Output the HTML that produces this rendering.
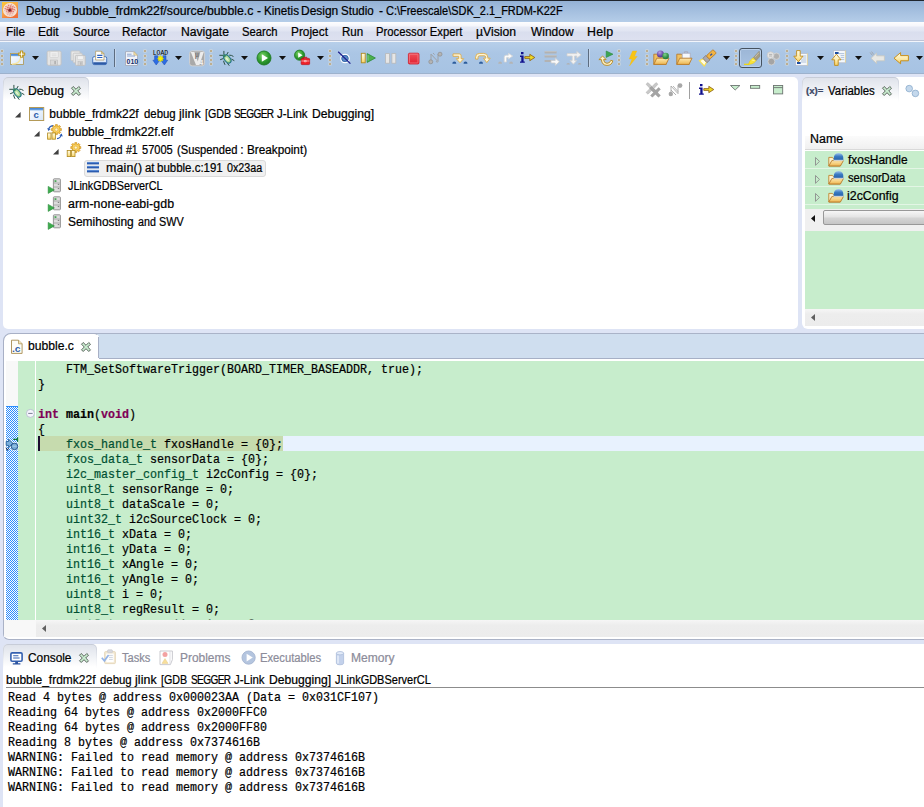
<!DOCTYPE html>
<html><head><meta charset="utf-8"><title>Debug - bubble_frdmk22f/source/bubble.c - Kinetis Design Studio</title>
<style>

html,body{margin:0;padding:0}
body{width:924px;height:807px;overflow:hidden;position:relative;background:#dee4f5;font-family:'Liberation Sans',sans-serif;font-size:12px}
div,span,svg{position:absolute}
.t{white-space:pre;line-height:1;transform-origin:0 0;-webkit-text-stroke:0.22px currentColor}
.ic{width:16px;height:16px;overflow:visible}

</style></head>
<body>
<div style="left:0px;top:0px;width:924px;height:22px;background:linear-gradient(#92b0d4,#9cb8da 25%,#a8c2e1 60%,#b5cde8)"></div>
<div style="left:0px;top:0px;width:924px;height:1px;background:#20262e"></div>
<div style="left:0px;top:22px;width:924px;height:18px;background:linear-gradient(#fdfdfe 0,#f5f6fb 4px,#e7eaf5 5px,#e1e5f2 9px,#d9deee 10px,#dde1f0 18px)"></div>
<div style="left:0px;top:40px;width:924px;height:1px;background:#bcc3d6"></div>
<div style="left:0px;top:41px;width:924px;height:1px;background:#f2f5fb"></div>
<div style="left:0px;top:42px;width:924px;height:31px;background:linear-gradient(#b7cfea,#abc6e5 35%,#a7c3e3)"></div>
<div style="left:0px;top:73px;width:924px;height:1px;background:#9db2cd"></div>
<div style="left:3px;top:77px;width:795px;height:252px;background:#fff;border-radius:5px 5px 5px 5px"></div>
<div style="left:3px;top:77px;width:86px;height:26px;box-sizing:border-box;background:linear-gradient(#dfe3eb,#fff 88%) padding-box,linear-gradient(#c6cbd7,#eef0f4 60%,#fff 95%) border-box;border-radius:5px 5px 0 0;border:1px solid transparent;border-bottom:0"></div>
<div style="left:802px;top:77px;width:130px;height:252px;background:#fff;border-radius:5px 0 0 6px"></div>
<div style="left:802px;top:77px;width:97px;height:26px;box-sizing:border-box;background:linear-gradient(#dfe3eb,#fff 88%) padding-box,linear-gradient(#c6cbd7,#eef0f4 60%,#fff 95%) border-box;border-radius:5px 5px 0 0;border:1px solid transparent;border-bottom:0"></div>
<div style="left:805px;top:136px;width:119px;height:13px;background:linear-gradient(#fbfbfb,#f0f0f0)"></div>
<div style="left:805px;top:148.5px;width:119px;height:1px;background:#d9d9d9"></div>
<div style="left:805px;top:151px;width:119px;height:58px;background:#c7edcc"></div>
<div style="left:805px;top:168px;width:119px;height:1px;background:#e3f6e5"></div>
<div style="left:805px;top:186px;width:119px;height:1px;background:#e3f6e5"></div>
<div style="left:805px;top:204px;width:119px;height:1px;background:#e3f6e5"></div>
<div style="left:805px;top:209px;width:119px;height:22px;background:#f0f0f0"></div>
<div style="left:823px;top:210px;width:110px;height:14.5px;box-sizing:border-box;border:1px solid #989898;border-radius:2px;background:linear-gradient(#f6f6f6,#e4e4e4 45%,#d4d4d4 55%,#c6c6c6)"></div>
<svg style="left:811px;top:214.5px;width:4px;height:7px" viewBox="0 0 4 7"><path d="M4 0v7L0 3.5z" fill="#111"/></svg>
<div style="left:805px;top:231px;width:119px;height:78px;background:#c7edcc"></div>
<div style="left:805px;top:309px;width:119px;height:17px;background:linear-gradient(#f6f6f6,#ededed 30%,#ececec)"></div>
<svg style="left:811px;top:314px;width:4px;height:7px" viewBox="0 0 4 7"><path d="M4 0v7L0 3.5z" fill="#606060"/></svg>
<div style="left:3px;top:333px;width:921px;height:26px;background:#cfdeef;border-radius:8px 0 0 0"></div>
<div style="left:10px;top:333px;width:914px;height:1px;background:#aab3c8"></div>
<div style="left:3px;top:358px;width:921px;height:1px;background:#a6b0c6"></div>
<div style="left:3px;top:359px;width:930px;height:281px;box-sizing:border-box;background:#fff;border:1px solid #aab2c6;border-top:0;border-radius:0 0 0 6px"></div>
<div style="left:3px;top:333px;width:96px;height:27px;box-sizing:border-box;background:#fff;border-radius:8px 5px 0 0;border:1px solid #a8b0c6;border-bottom:0;border-right-color:transparent"></div>
<div style="left:98px;top:337px;width:1px;height:21px;background:#a8b0c6"></div>
<div style="left:6px;top:361px;width:12px;height:259px;background:#f8f8f8"></div>
<div style="left:18px;top:361px;width:17px;height:259px;background:#c7edcc"></div>
<div style="left:36px;top:361px;width:888px;height:259px;background:#c7edcc"></div>
<div style="left:6px;top:406px;width:12px;height:214px;background:conic-gradient(#2a8cff 25%,#fdfdfd 0 50%,#2a8cff 0 75%,#fdfdfd 0) 0 1px/2px 2px"></div>
<div style="left:6px;top:406px;width:12px;height:1px;background:#2a8cff"></div>
<div style="left:38px;top:436px;width:886px;height:15px;background:#e8f2fe"></div>
<div style="left:40px;top:436px;width:243px;height:15px;background:#c6dbae"></div>
<div style="left:38px;top:436px;width:2px;height:15px;background:#1c0c30"></div>
<div style="left:4px;top:620px;width:32px;height:17px;background:#f8f8f8"></div>
<div style="left:36px;top:620px;width:888px;height:17px;background:linear-gradient(#f6f6f6,#ededed 30%,#ececec)"></div>
<svg style="left:42px;top:625px;width:4px;height:7px" viewBox="0 0 4 7"><path d="M4 0v7L0 3.5z" fill="#606060"/></svg>
<div style="left:0px;top:640px;width:924px;height:4px;background:#dee4f5"></div>
<div style="left:3px;top:644px;width:930px;height:170px;background:#fff;border-radius:5px 0 0 0"></div>
<div style="left:3px;top:644px;width:94px;height:26px;box-sizing:border-box;background:linear-gradient(#dfe3eb,#fff 88%) padding-box,linear-gradient(#c6cbd7,#eef0f4 60%,#fff 95%) border-box;border-radius:5px 5px 0 0;border:1px solid transparent;border-bottom:0"></div>
<div style="left:6px;top:687px;width:918px;height:1px;background:#8c8c8c"></div>
<svg width="0" height="0" style="left:0;top:0"><defs>
<linearGradient id="gWin" x1="0" y1="0" x2="1" y2="1"><stop offset="0" stop-color="#fff"/><stop offset="1" stop-color="#d6e6fa"/></linearGradient>
<linearGradient id="gBar" x1="0" y1="0" x2="0" y2="1"><stop offset="0" stop-color="#3f7fd0"/><stop offset="1" stop-color="#78aee8"/></linearGradient>
<radialGradient id="gGreen" cx="0.4" cy="0.35" r="0.7"><stop offset="0" stop-color="#7fd46a"/><stop offset="0.6" stop-color="#2e9a2e"/><stop offset="1" stop-color="#1d7a22"/></radialGradient>
<linearGradient id="gYel" x1="0" y1="0" x2="0" y2="1"><stop offset="0" stop-color="#fffce8"/><stop offset="0.55" stop-color="#fdeaa8"/><stop offset="1" stop-color="#f7cf62"/></linearGradient>
<radialGradient id="gApp" cx="0.5" cy="0.5" r="0.5"><stop offset="0" stop-color="#7c2c2c"/><stop offset="0.14" stop-color="#b85050"/><stop offset="0.3" stop-color="#e8b0a0"/><stop offset="0.7" stop-color="#f4d8cc"/><stop offset="1" stop-color="#f8ead8"/></radialGradient>
<linearGradient id="gAppBg" x1="0" y1="0" x2="0.6" y2="1"><stop offset="0" stop-color="#fcc838"/><stop offset="0.5" stop-color="#f8a848"/><stop offset="1" stop-color="#f07038"/></linearGradient>
<pattern id="dots" width="2.2" height="2.2" patternUnits="userSpaceOnUse" patternTransform="rotate(20)"><circle cx="0.8" cy="0.8" r="0.62" fill="#d02828"/></pattern>
<linearGradient id="gFold" x1="0" y1="0" x2="0" y2="1"><stop offset="0" stop-color="#fde9b0"/><stop offset="1" stop-color="#eeb650"/></linearGradient>
<linearGradient id="gGray" x1="0" y1="0" x2="0" y2="1"><stop offset="0" stop-color="#ececec"/><stop offset="1" stop-color="#c4c4c4"/></linearGradient>
<radialGradient id="gBlueBall" cx="0.4" cy="0.3" r="0.8"><stop offset="0" stop-color="#9cc4f4"/><stop offset="0.5" stop-color="#3a78c8"/><stop offset="1" stop-color="#1c4c98"/></radialGradient>
<radialGradient id="gPurp" cx="0.4" cy="0.3" r="0.8"><stop offset="0" stop-color="#b8a0e0"/><stop offset="0.6" stop-color="#6a4aa8"/><stop offset="1" stop-color="#4a2f88"/></radialGradient>
<radialGradient id="gGrBall" cx="0.4" cy="0.3" r="0.8"><stop offset="0" stop-color="#7fcf8a"/><stop offset="0.6" stop-color="#2f8f45"/><stop offset="1" stop-color="#1f6f35"/></radialGradient>
<linearGradient id="gRed" x1="0" y1="0" x2="0" y2="1"><stop offset="0" stop-color="#f0505a"/><stop offset="1" stop-color="#e02030"/></linearGradient>
<radialGradient id="gBug" cx="0.45" cy="0.45" r="0.6"><stop offset="0" stop-color="#e4f6d4"/><stop offset="0.6" stop-color="#a4d490"/><stop offset="1" stop-color="#6cb068"/></radialGradient>
<linearGradient id="gDome" x1="0" y1="0" x2="0" y2="1"><stop offset="0" stop-color="#a4c8ee"/><stop offset="0.45" stop-color="#3c7cc4"/><stop offset="1" stop-color="#2460a8"/></linearGradient>
<linearGradient id="gThumb" x1="0" y1="0" x2="0" y2="1"><stop offset="0" stop-color="#f6f6f6"/><stop offset="0.5" stop-color="#e6e6e6"/><stop offset="1" stop-color="#d2d2d2"/></linearGradient>
<pattern id="hatch" width="2" height="2" patternUnits="userSpaceOnUse"><rect width="2" height="2" fill="#b9d8fb"/><rect width="1" height="1" fill="#2f86ee"/><rect x="1" y="1" width="1" height="1" fill="#2f86ee"/></pattern>
</defs></svg>
<div style="left:1px;top:50px;width:2px;height:2px;background:#bdae90;box-shadow:0 0 0 .5px rgba(235,230,215,.7)"></div>
<div style="left:1px;top:55px;width:2px;height:2px;background:#bdae90;box-shadow:0 0 0 .5px rgba(235,230,215,.7)"></div>
<div style="left:1px;top:59px;width:2px;height:2px;background:#bdae90;box-shadow:0 0 0 .5px rgba(235,230,215,.7)"></div>
<div style="left:1px;top:63px;width:2px;height:2px;background:#bdae90;box-shadow:0 0 0 .5px rgba(235,230,215,.7)"></div>
<div style="left:144px;top:50px;width:2px;height:2px;background:#bdae90;box-shadow:0 0 0 .5px rgba(235,230,215,.7)"></div>
<div style="left:144px;top:55px;width:2px;height:2px;background:#bdae90;box-shadow:0 0 0 .5px rgba(235,230,215,.7)"></div>
<div style="left:144px;top:59px;width:2px;height:2px;background:#bdae90;box-shadow:0 0 0 .5px rgba(235,230,215,.7)"></div>
<div style="left:144px;top:63px;width:2px;height:2px;background:#bdae90;box-shadow:0 0 0 .5px rgba(235,230,215,.7)"></div>
<div style="left:210px;top:50px;width:2px;height:2px;background:#bdae90;box-shadow:0 0 0 .5px rgba(235,230,215,.7)"></div>
<div style="left:210px;top:55px;width:2px;height:2px;background:#bdae90;box-shadow:0 0 0 .5px rgba(235,230,215,.7)"></div>
<div style="left:210px;top:59px;width:2px;height:2px;background:#bdae90;box-shadow:0 0 0 .5px rgba(235,230,215,.7)"></div>
<div style="left:210px;top:63px;width:2px;height:2px;background:#bdae90;box-shadow:0 0 0 .5px rgba(235,230,215,.7)"></div>
<div style="left:329px;top:50px;width:2px;height:2px;background:#bdae90;box-shadow:0 0 0 .5px rgba(235,230,215,.7)"></div>
<div style="left:329px;top:55px;width:2px;height:2px;background:#bdae90;box-shadow:0 0 0 .5px rgba(235,230,215,.7)"></div>
<div style="left:329px;top:59px;width:2px;height:2px;background:#bdae90;box-shadow:0 0 0 .5px rgba(235,230,215,.7)"></div>
<div style="left:329px;top:63px;width:2px;height:2px;background:#bdae90;box-shadow:0 0 0 .5px rgba(235,230,215,.7)"></div>
<div style="left:618px;top:50px;width:2px;height:2px;background:#bdae90;box-shadow:0 0 0 .5px rgba(235,230,215,.7)"></div>
<div style="left:618px;top:55px;width:2px;height:2px;background:#bdae90;box-shadow:0 0 0 .5px rgba(235,230,215,.7)"></div>
<div style="left:618px;top:59px;width:2px;height:2px;background:#bdae90;box-shadow:0 0 0 .5px rgba(235,230,215,.7)"></div>
<div style="left:618px;top:63px;width:2px;height:2px;background:#bdae90;box-shadow:0 0 0 .5px rgba(235,230,215,.7)"></div>
<div style="left:646px;top:50px;width:2px;height:2px;background:#bdae90;box-shadow:0 0 0 .5px rgba(235,230,215,.7)"></div>
<div style="left:646px;top:55px;width:2px;height:2px;background:#bdae90;box-shadow:0 0 0 .5px rgba(235,230,215,.7)"></div>
<div style="left:646px;top:59px;width:2px;height:2px;background:#bdae90;box-shadow:0 0 0 .5px rgba(235,230,215,.7)"></div>
<div style="left:646px;top:63px;width:2px;height:2px;background:#bdae90;box-shadow:0 0 0 .5px rgba(235,230,215,.7)"></div>
<div style="left:735px;top:50px;width:2px;height:2px;background:#bdae90;box-shadow:0 0 0 .5px rgba(235,230,215,.7)"></div>
<div style="left:735px;top:55px;width:2px;height:2px;background:#bdae90;box-shadow:0 0 0 .5px rgba(235,230,215,.7)"></div>
<div style="left:735px;top:59px;width:2px;height:2px;background:#bdae90;box-shadow:0 0 0 .5px rgba(235,230,215,.7)"></div>
<div style="left:735px;top:63px;width:2px;height:2px;background:#bdae90;box-shadow:0 0 0 .5px rgba(235,230,215,.7)"></div>
<div style="left:786px;top:50px;width:2px;height:2px;background:#bdae90;box-shadow:0 0 0 .5px rgba(235,230,215,.7)"></div>
<div style="left:786px;top:55px;width:2px;height:2px;background:#bdae90;box-shadow:0 0 0 .5px rgba(235,230,215,.7)"></div>
<div style="left:786px;top:59px;width:2px;height:2px;background:#bdae90;box-shadow:0 0 0 .5px rgba(235,230,215,.7)"></div>
<div style="left:786px;top:63px;width:2px;height:2px;background:#bdae90;box-shadow:0 0 0 .5px rgba(235,230,215,.7)"></div>
<div style="left:114px;top:49px;width:1px;height:18px;background:#5c6c80"></div>
<div style="left:115px;top:49px;width:1px;height:18px;background:#c4d6ec"></div>
<div style="left:588px;top:49px;width:1px;height:18px;background:#5c6c80"></div>
<div style="left:589px;top:49px;width:1px;height:18px;background:#c4d6ec"></div>
<div style="left:739px;top:48px;width:23px;height:20px;box-sizing:border-box;border:1px solid #46525f;border-radius:3px;background:linear-gradient(#9cb6d6,#a9c3e2);box-shadow:inset 0 0 0 1px #b9cfea"></div>
<svg class="ic" style="left:9px;top:50px;width:16px;height:16px;" viewBox="0 0 16 16"><rect x="1.5" y="3.5" width="13" height="11" fill="url(#gWin)" stroke="#b09a58" stroke-width=".85"/>
<path d="M3 14.2Q10.5 14 11.8 7.6" fill="none" stroke="#f8e498" stroke-width="1.5" opacity=".9"/>
<rect x="2" y="4" width="12" height="2.2" fill="url(#gBar)"/>
<path d="M11.6 1h2v2.1h2.1v2h-2.1v2.1h-2V5.1H9.5v-2h2.1z" fill="#fff" stroke="#c09a24" stroke-width="1.1" stroke-linejoin="round"/></svg>
<svg class="ic" style="left:46.4px;top:50px;width:16px;height:16px;" viewBox="0 0 16 16"><rect x="1.1" y="1.1" width="14" height="14.2" rx="1.4" fill="#e4e4e4" stroke="#c2c2c2" stroke-width=".9"/>
<rect x="4" y="1.6" width="8.2" height="6" rx=".6" fill="#f2f2f2" stroke="#cacaca" stroke-width=".6"/>
<path d="M5.6 4h5M5.6 5.8h5" stroke="#d2d2d2" stroke-width=".8"/>
<rect x="4.6" y="10" width="7" height="5" fill="#d8d8d8" stroke="#bcbcbc" stroke-width=".6"/><rect x="8.4" y="11" width="1.4" height="3.2" fill="#a8a8a8"/></svg>
<svg class="ic" style="left:70px;top:50px;width:16px;height:16px;" viewBox="0 0 16 16"><rect x="1" y="1" width="9" height="9.6" rx="1" fill="#e8e8e8" stroke="#c6c6c6" stroke-width=".9"/>
<rect x="3.2" y="3.2" width="9" height="9.6" rx="1" fill="#e8e8e8" stroke="#c6c6c6" stroke-width=".9"/>
<rect x="5.4" y="5.4" width="9.8" height="10" rx="1" fill="#e2e2e2" stroke="#bebebe" stroke-width=".9"/>
<rect x="7.4" y="5.9" width="5.8" height="3.8" fill="#f2f2f2" stroke="#cccccc" stroke-width=".5"/>
<rect x="8" y="11.6" width="4.6" height="3.6" fill="#d4d4d4" stroke="#b8b8b8" stroke-width=".5"/><rect x="10.4" y="12.2" width="1" height="2.6" fill="#a8a8a8"/></svg>
<svg class="ic" style="left:92px;top:50px;width:16px;height:16px;" viewBox="0 0 16 16"><rect x=".7" y="6.6" width="14" height="8" rx="1.6" fill="#dce8f8" stroke="#3c6cb8" stroke-width=".9"/>
<path d="M1.2 12.2h13v1.4q0 1-1 1h-11q-1 0-1-1z" fill="#2c5aa6"/>
<path d="M1.6 8.4h12.2" stroke="#f6faff" stroke-width="1.2"/>
<path d="M3.6 10V1.2h5.8l2.6 2.6V10z" fill="#fdfdfb" stroke="#b4a070" stroke-width=".8"/>
<path d="M9.4 1.2v2.6H12z" fill="#e8d498" stroke="#b49c58" stroke-width=".6"/>
<path d="M5.2 5.4h5.2M5.2 7.5h5.2" stroke="#2c62c0" stroke-width="1.1"/></svg>
<svg class="ic" style="left:124px;top:50px;width:16px;height:16px;" viewBox="0 0 16 16"><path d="M1.5 1.6h8.4l3.6 3.6v10.3H1.5z" fill="#f0f3f9" stroke="#a4acbc" stroke-width=".9"/>
<path d="M9.9 1.6v3.6h3.6z" fill="#f2e2b0" stroke="#c4ac70" stroke-width=".6"/>
<path d="M3 4.2h4.6M3 6h8" stroke="#8ca4d0" stroke-width="1"/>
<text x="2.6" y="14" font-family="'Liberation Sans',sans-serif" font-weight="bold" font-size="7" fill="#14306c" textLength="11.6" lengthAdjust="spacingAndGlyphs">010</text></svg>
<svg class="ic" style="left:152px;top:50px;width:16px;height:16px;" viewBox="0 0 16 16"><text x=".7" y="4.9" font-family="'Liberation Mono',monospace" font-size="6.4" fill="#000" textLength="15.4" lengthAdjust="spacingAndGlyphs">LOAD</text>
<path d="M2.6 5.8h3.2v4.4h2L4.2 15 .9 10.2h1.7z" fill="#2c6ce4" stroke="#1c4cb4" stroke-width=".5"/>
<path d="M10.8 5.8h3.2v4.4h1.7L12.4 15 8.8 10.2h2z" fill="#2c6ce4" stroke="#1c4cb4" stroke-width=".5"/>
<path d="M8.6 5.4l.7 1.6 1.7-.7-.7 1.7 1.6.7-1.6.7.7 1.7-1.7-.7-.7 1.6-.7-1.6-1.7.7.7-1.7-1.6-.7 1.6-.7-.7-1.7 1.7.7z" fill="#f6f200" stroke="#d4cc00" stroke-width=".4"/></svg>
<svg class="ic" style="left:189px;top:50px;width:16px;height:16px;" viewBox="0 0 16 16"><rect x=".6" y=".9" width="15" height="15" rx="2.6" fill="#a9a9a9" stroke="#d2d2d2" stroke-width=".9"/>
<path d="M1.8 2h3.6L8.8 11.6 11.4 2h3.4L10.4 15H7z" fill="#ececec"/>
<text x="5.8" y="7.4" font-family="'Liberation Sans',sans-serif" font-weight="bold" font-size="7.4" fill="#7c7c7c">µ</text>
<text x="10.4" y="14.8" font-family="'Liberation Sans',sans-serif" font-weight="bold" font-size="6.6" fill="#f4f4f4">4</text></svg>
<svg class="ic" style="left:218.6px;top:50px;width:16px;height:16px;" viewBox="0 0 16 16"><g stroke="#2c5044" stroke-width="1" stroke-linecap="round" fill="none">
<path d="M4.900 1.300V4.200M9 2.400L7.700 4.700M.700 5.300H3.600M1.500 9.600L4.100 8.600M4.700 11.200L5.200 13 5.900 14.500M8.600 13.500L10.100 15.400M10.600 5.200L12.400 5.400 14.100 6.300M12.700 9.200L15 10.500"/></g>
<ellipse cx="8.4" cy="9" rx="2.8" ry="4.6" transform="rotate(-38 8.4 9)" fill="url(#gBug)" stroke="#1c7084" stroke-width="1"/>
<circle cx="5.300" cy="5.800" r="1.200" fill="#3c8c54" stroke="#1c6c74" stroke-width=".5"/>
<path d="M7.200 8.200l2.600 3" stroke="#f0fae8" stroke-width=".9" opacity=".8"/></svg>
<svg class="ic" style="left:256px;top:50px;width:16px;height:16px;" viewBox="0 0 16 16"><circle cx="8" cy="8" r="7" fill="url(#gGreen)" stroke="#1f7a24" stroke-width=".9"/>
<path d="M5.8 4.2v7.6L12 8z" fill="#fff"/></svg>
<svg class="ic" style="left:294px;top:50px;width:16px;height:16px;" viewBox="0 0 16 16"><circle cx="5.6" cy="5.2" r="5.1" fill="url(#gGreen)" stroke="#1f7a24" stroke-width=".8"/>
<path d="M4.2 2.6v5.2L8.6 5.2z" fill="#fff"/>
<path d="M9.4 8.2v-.9h3.4v.9" fill="none" stroke="#d01018" stroke-width="1"/>
<rect x="7.2" y="8.4" width="8.4" height="6.2" rx=".8" fill="#ee2028" stroke="#c00c14" stroke-width=".7"/>
<path d="M7.4 11h8M10.4 10.4h1.8v1.4h-1.8z" stroke="#ffd0d0" stroke-width=".7" fill="none"/></svg>
<svg class="ic" style="left:337px;top:50px;width:16px;height:16px;" viewBox="0 0 16 16"><circle cx="8" cy="8.5" r="4.2" fill="#5b8cc8" stroke="#fff" stroke-width="1.3"/>
<circle cx="8" cy="8.5" r="3.2" fill="none" stroke="#2f5f9f" stroke-width=".7"/>
<path d="M1.2 1.8L13.4 13.6" stroke="#1c1c8c" stroke-width="1.2"/></svg>
<svg class="ic" style="left:359.5px;top:50px;width:16px;height:16px;" viewBox="0 0 16 16"><rect x="1.3" y="3.3" width="3.9" height="9.5" fill="url(#gYel)" stroke="#b08a20" stroke-width=".9"/>
<path d="M7.2 3.6v8.8L15.4 8z" fill="#4cb04c" stroke="#2c8c3c" stroke-width=".8"/>
<path d="M8 5.2v5.4" stroke="#8fd88f" stroke-width=".8"/></svg>
<svg class="ic" style="left:383px;top:50px;width:16px;height:16px;" viewBox="0 0 16 16"><rect x="2.6" y="3.6" width="3.9" height="9.6" fill="#e6e6e6" stroke="#b8b8b8" stroke-width=".8"/>
<rect x="8.9" y="3.6" width="3.9" height="9.6" fill="#e6e6e6" stroke="#b8b8b8" stroke-width=".8"/></svg>
<svg class="ic" style="left:406px;top:50px;width:16px;height:16px;" viewBox="0 0 16 16"><rect x="2.4" y="3.2" width="10.6" height="10.8" rx="1.2" fill="url(#gRed)" stroke="#d01824" stroke-width=".8"/>
<rect x="3.4" y="4.2" width="8.6" height="8.8" rx=".6" fill="none" stroke="#f88890" stroke-width=".7"/></svg>
<svg class="ic" style="left:428px;top:50px;width:16px;height:16px;" viewBox="0 0 16 16"><path d="M3 12.4V4.2L10 11.6V4" fill="none" stroke="#9c9c9c" stroke-width=".9"/>
<circle cx="2.8" cy="11.8" r="2" fill="#b4b4b4" stroke="#8c8c8c" stroke-width=".7"/>
<circle cx="12" cy="4.2" r="2" fill="#b4b4b4" stroke="#8c8c8c" stroke-width=".7"/>
<path d="M5 3l1.6 1.6M8 11l1.4 1.8" stroke="#9c9c9c" stroke-width=".8"/></svg>
<svg class="ic" style="left:451.5px;top:50px;width:16px;height:16px;" viewBox="0 0 16 16"><path d="M1 3.9h6.3q1.8 0 1.8 1.8v3h2.6L8 12.7 4.3 8.7h2.4V6.3H1z" fill="#fff6d8" stroke="#dcac48" stroke-width=".9" stroke-linejoin="round"/>
<path d="M0.3 13.8a2 2.2 0 0 1 4 0z" fill="#2c5c9c"/><path d="M11.5 13.8a2 2.2 0 0 1 4 0z" fill="#2c5c9c"/></svg>
<svg class="ic" style="left:475px;top:50px;width:16px;height:16px;" viewBox="0 0 16 16"><path d="M.6 9.1V7.2q0-3.8 4-3.8h4.2q4 0 4 3.8v1h2.4L11.8 12.6 8.5 8.2h2.2v-1q0-1.4-1.6-1.4H4.6Q3 5.8 3 7.2v1.9z" fill="#fff6d8" stroke="#dcac48" stroke-width=".9" stroke-linejoin="round"/>
<path d="M4 13.8a2 2.2 0 0 1 4 0z" fill="#2c5c9c"/></svg>
<svg class="ic" style="left:498px;top:50px;width:16px;height:16px;" viewBox="0 0 16 16"><path d="M6.2 12V7.2q0-2 2-2h2.2V3.3l4.3 2.8-4.3 2.8V7.4H9q-.5 0-.5.5V12z" fill="#fbfbfb" stroke="#d4d4d4" stroke-width=".8" stroke-linejoin="round"/>
<path d="M0.2 13.8a1.9 2.2 0 0 1 3.8 0z" fill="#b4b4b4"/><path d="M11.2 13.8a1.9 2.2 0 0 1 3.8 0z" fill="#b4b4b4"/></svg>
<svg class="ic" style="left:519px;top:50px;width:16px;height:16px;" viewBox="0 0 16 16"><path d="M2 2h2.5v2.3H2zM1 5.6h3.6v5.8h1.2v1.3H1v-1.3h1.3V6.9H1z" fill="#10108c"/>
<path d="M5.8 6.6h5V4.3l5 3.2-5 3.2V8.4h-5z" fill="#ecd824" stroke="#8c5c14" stroke-width=".8" stroke-linejoin="round"/></svg>
<svg class="ic" style="left:543.5px;top:50px;width:16px;height:16px;" viewBox="0 0 16 16"><path d="M.6 2.3h12M.6 6.4h12M.6 11h6.8" stroke="#b2b2b2" stroke-width="2.2"/>
<path d="M.6 1.5h12M.6 5.6h12" stroke="#c8c8c8" stroke-width=".6"/>
<path d="M7 10.4h4.2V7.9l4.2 3.8-4.2 3.8v-2.5H7z" fill="#fafafa" stroke="#cccccc" stroke-width=".8" stroke-linejoin="round"/></svg>
<svg class="ic" style="left:566px;top:50px;width:16px;height:16px;" viewBox="0 0 16 16"><path d="M1 3.6h9.8V1.4l4.4 3.4-4.4 3.4V6H8.6v4.4h2.2L7.4 14.2 4 10.4h2.2V6H1z" fill="#f2f2f2" stroke="#cfcfcf" stroke-width=".8" stroke-linejoin="round"/>
<path d="M.4 14.6a1.8 1.5 0 0 1 3.6 0zM11.8 14.6a1.8 1.5 0 0 1 3.6 0z" fill="#b0b0b0"/></svg>
<svg class="ic" style="left:597.5px;top:50px;width:16px;height:16px;" viewBox="0 0 16 16"><path d="M8.2 1v6.4L15 4.2z" fill="#3ca450" stroke="#2c8c40" stroke-width=".6"/>
<path d="M4.6 6L.9 9.6h2.5q.5 5.8 5.6 5.8 4.8 0 5.8-4.6l-2-.5q-.8 3-3.800 3-3.100 0-3.400-3.700h2.500z" fill="#fff2c8" stroke="#b8881c" stroke-width=".9" stroke-linejoin="round"/></svg>
<svg class="ic" style="left:625px;top:50px;width:16px;height:16px;" viewBox="0 0 16 16"><path d="M7.6 1h4.2L9.4 6.4h2.8L4.6 15.8 7 9H4.2z" fill="#f8c414" stroke="#f4bc10" stroke-width=".4"/></svg>
<svg class="ic" style="left:653px;top:50px;width:16px;height:16px;" viewBox="0 0 16 16"><path d="M.8 14.4V4.2h4.6l1.4 1.6h6.4v8.6z" fill="#f0c060" stroke="#b87c2e" stroke-width=".9" stroke-linejoin="round"/>
<path d="M.8 14.4l3-6.2H16l-3 6.2z" fill="url(#gFold)" stroke="#b87c2e" stroke-width=".9" stroke-linejoin="round"/>
<circle cx="7.4" cy="4" r="3.5" fill="url(#gPurp)"/>
<circle cx="12.6" cy="6" r="3.3" fill="url(#gGrBall)"/></svg>
<svg class="ic" style="left:675.5px;top:50px;width:16px;height:16px;" viewBox="0 0 16 16"><path d="M.8 14.4V4.2h4.6l1.4 1.6h6.4v8.6z" fill="#f0c060" stroke="#b87c2e" stroke-width=".9" stroke-linejoin="round"/>
<path d="M8.4 3.2V1.8h3.2v1.4" fill="none" stroke="#a8a8b8" stroke-width="1"/>
<rect x="6.2" y="3.2" width="8" height="5.8" fill="#f6f8fc" stroke="#a8acc0" stroke-width=".8"/>
<path d="M.8 14.4l3-6.2H16l-3 6.2z" fill="url(#gFold)" stroke="#b87c2e" stroke-width=".9" stroke-linejoin="round"/></svg>
<svg class="ic" style="left:700px;top:50px;width:16px;height:16px;" viewBox="0 0 16 16"><g transform="translate(.4 -.8) rotate(-43 8 8)"><path d="M-1 4.4L3.2 5.6v4.8l-4.200 1.200z" fill="#fffce4" stroke="#f6dc50" stroke-width="1.1"/>
<rect x="3.2" y="5" width="4.2" height="6" fill="#aca8ac" stroke="#7c787c" stroke-width=".7"/>
<rect x="7.4" y="5.6" width="9.2" height="4.800" rx=".9" fill="#f2b444" stroke="#b87820" stroke-width=".8"/>
<rect x="10.6" y="7.300" width="2.400" height="1.400" fill="#3050a0"/></g></svg>
<svg class="ic" style="left:743.5px;top:50px;width:16px;height:16px;" viewBox="0 0 16 16"><path d="M0 14.300h5.500" stroke="#f4d800" stroke-width="1.200"/>
<path d="M4.600 14.200q.600-2.400 2.200-4.400l2.600-2.200 2.800 2.800-2.400 2.600q-2.400 1.400-5.200 1.200z" fill="#f8e23c" stroke="#ecc800" stroke-width=".5"/>
<path d="M7.800 10l3 .800" stroke="#fff8b0" stroke-width=".8"/>
<path d="M9.400 7.600L15.200 1.200l.800 5-3.800 4.200z" fill="#a49c84" stroke="#8c846c" stroke-width=".5"/>
<path d="M11 7.200l3.800-4.400" stroke="#ccc4ac" stroke-width=".9"/></svg>
<svg class="ic" style="left:765.5px;top:50px;width:16px;height:16px;" viewBox="0 0 16 16"><circle cx="10.4" cy="6.2" r="3.2" fill="#b0b0b0" stroke="#d8d8d8" stroke-width=".8"/>
<circle cx="4.6" cy="5.2" r="3.4" fill="#e4e4e4" stroke="#c8c8c8" stroke-width=".8"/>
<path d="M3 4.4h3.2M3 6h3.2" stroke="#a8a8a8" stroke-width=".8"/>
<circle cx="5.4" cy="11.6" r="3.4" fill="#a4a4a4" stroke="#d4d4d4" stroke-width=".8"/></svg>
<svg class="ic" style="left:793px;top:50px;width:16px;height:16px;" viewBox="0 0 16 16"><rect x="2.4" y="3.4" width="12.4" height="12.2" fill="#f4f8fc" stroke="#b4bccc" stroke-width=".8"/>
<path d="M14.4 3.4v12" stroke="#e0d4a0" stroke-width="1"/>
<path d="M9.6 6h3.6M9.6 8h3.6M8 10h5.2M8 12h5.2" stroke="#a8bcd8" stroke-width=".9"/>
<rect x="4" y="12" width="3.6" height="2" fill="#1c4ca0"/>
<path d="M3.6.6h3.6v5.6h2.8l-4.6 5.6L.8 6.2h2.8z" fill="url(#gYel)" stroke="#c08c1c" stroke-width=".9" stroke-linejoin="round"/></svg>
<svg class="ic" style="left:831px;top:50px;width:16px;height:16px;" viewBox="0 0 16 16"><rect x="2.4" y=".6" width="12.4" height="12.2" fill="#f4f8fc" stroke="#b4bccc" stroke-width=".8"/>
<path d="M14.4 .6v12" stroke="#e0d4a0" stroke-width="1"/>
<path d="M8 3.6h5.2M9.6 5.6h3.6M9.6 7.6h3.6M9.6 9.6h3.6" stroke="#a8bcd8" stroke-width=".9"/>
<rect x="4" y="2" width="3.6" height="2" fill="#1c4ca0"/>
<path d="M3.6 15.4h3.6V9.8h2.8L5.4 4.2.8 9.8h2.8z" fill="url(#gYel)" stroke="#c08c1c" stroke-width=".9" stroke-linejoin="round"/></svg>
<svg class="ic" style="left:869px;top:50px;width:16px;height:16px;" viewBox="0 0 16 16"><path d="M15.4 5.8v5H7.6v2.8L2 8.3l5.6-5.3v2.8z" fill="#e8e8e4" stroke="#c8c8c0" stroke-width=".8" stroke-linejoin="round"/>
<path d="M1 2.4l2.4 3M2.6 1.6l2.2 3" stroke="#a0a0a0" stroke-width=".8"/></svg>
<svg class="ic" style="left:893px;top:50px;width:16px;height:16px;" viewBox="0 0 16 16"><path d="M15.4 5.6v5.2H7.6v3L1 8.2l6.6-5.6v3z" fill="url(#gYel)" stroke="#c8901c" stroke-width="1" stroke-linejoin="round"/></svg>
<svg class="ic" style="left:32px;top:56px;width:7px;height:4px;" viewBox="0 0 7 4"><path d="M0 0h7L3.5 4z" fill="#111"/></svg>
<svg class="ic" style="left:175px;top:56px;width:7px;height:4px;" viewBox="0 0 7 4"><path d="M0 0h7L3.5 4z" fill="#111"/></svg>
<svg class="ic" style="left:241px;top:56px;width:7px;height:4px;" viewBox="0 0 7 4"><path d="M0 0h7L3.5 4z" fill="#111"/></svg>
<svg class="ic" style="left:279px;top:56px;width:7px;height:4px;" viewBox="0 0 7 4"><path d="M0 0h7L3.5 4z" fill="#111"/></svg>
<svg class="ic" style="left:317px;top:56px;width:7px;height:4px;" viewBox="0 0 7 4"><path d="M0 0h7L3.5 4z" fill="#111"/></svg>
<svg class="ic" style="left:723px;top:56px;width:7px;height:4px;" viewBox="0 0 7 4"><path d="M0 0h7L3.5 4z" fill="#111"/></svg>
<svg class="ic" style="left:817px;top:56px;width:7px;height:4px;" viewBox="0 0 7 4"><path d="M0 0h7L3.5 4z" fill="#111"/></svg>
<svg class="ic" style="left:855px;top:56px;width:7px;height:4px;" viewBox="0 0 7 4"><path d="M0 0h7L3.5 4z" fill="#111"/></svg>
<svg class="ic" style="left:916px;top:56px;width:7px;height:4px;" viewBox="0 0 7 4"><path d="M0 0h7L3.5 4z" fill="#111"/></svg>
<svg class="ic" style="left:2px;top:2px;width:16px;height:16px;" viewBox="0 0 16 16"><rect width="16" height="16" fill="url(#gAppBg)"/><circle cx="8" cy="8" r="7" fill="url(#gApp)"/>
<path d="M2 8a6 6 0 0 1 12 0q-2 3-6 1.4Q5 10.6 2 8z" fill="url(#dots)" opacity=".9"/><circle cx="8" cy="10.6" r="4" fill="url(#dots)" opacity=".35"/>
<circle cx="7.6" cy="8.4" r="1.3" fill="#6c2424" opacity=".8"/></svg>
<svg class="ic" style="left:8.8px;top:83.6px;width:16px;height:16px;" viewBox="0 0 16 16"><g stroke="#2c5044" stroke-width="1" stroke-linecap="round" fill="none">
<path d="M4.900 1.300V4.200M9 2.400L7.700 4.700M.700 5.300H3.600M1.500 9.600L4.100 8.600M4.700 11.200L5.200 13 5.900 14.500M8.600 13.500L10.100 15.400M10.600 5.200L12.400 5.400 14.100 6.300M12.700 9.200L15 10.500"/></g>
<ellipse cx="8.4" cy="9" rx="2.8" ry="4.6" transform="rotate(-38 8.4 9)" fill="url(#gBug)" stroke="#1c7084" stroke-width="1"/>
<circle cx="5.300" cy="5.800" r="1.200" fill="#3c8c54" stroke="#1c6c74" stroke-width=".5"/>
<path d="M7.200 8.200l2.600 3" stroke="#f0fae8" stroke-width=".9" opacity=".8"/></svg>
<svg class="ic" style="left:71px;top:86px;width:10px;height:10px;" viewBox="0 0 10 10"><path d="M.5 2.2L2.2.5 5 3.3 7.8.5 9.5 2.2 6.7 5 9.5 7.8 7.8 9.5 5 6.7 2.2 9.5.5 7.8 3.3 5z" fill="#c9edd0" stroke="#5c665e" stroke-width="1" stroke-linejoin="round"/></svg>
<svg class="ic" style="left:644.5px;top:82.4px;width:16px;height:16px;" viewBox="0 0 16 16"><path d="M1 2.2L3 .6l4 4 4-4L13 2.2 9 6.4l4 4-2 1.8-4-4-4 4-2-1.8 4-4z" fill="#c8c8c8" stroke="#b0b0b0" stroke-width=".5"/>
<path d="M4.6 6.2l2-1.6 4 4 3-3 1.8 1.6-3 3.2 3 3-2 1.8-3-3-3 3-1.8-1.8 3-3z" fill="#a4a4a4" stroke="#949494" stroke-width=".5"/></svg>
<svg class="ic" style="left:667.5px;top:82.4px;width:16px;height:16px;" viewBox="0 0 16 16"><path d="M3 12V4l7 7.6V3.6M5 4l5 5.6M3 8l5 5" fill="none" stroke="#a0a0a0" stroke-width=".8"/>
<circle cx="2.8" cy="12" r="2.2" fill="#a8a8a8"/>
<circle cx="12" cy="3.6" r="2.4" fill="#a8a8a8"/></svg>
<div style="left:689px;top:82px;width:1px;height:17px;background:#a0a0a0"></div>
<svg class="ic" style="left:697.5px;top:82.4px;width:16px;height:16px;" viewBox="0 0 16 16"><path d="M2 2h2.5v2.3H2zM1 5.6h3.6v5.8h1.2v1.3H1v-1.3h1.3V6.9H1z" fill="#10108c"/>
<path d="M5.8 6.6h5V4.3l5 3.2-5 3.2V8.4h-5z" fill="#ecd824" stroke="#8c5c14" stroke-width=".8" stroke-linejoin="round"/></svg>
<svg class="ic" style="left:730px;top:85px;width:10.4px;height:5.5px;" viewBox="0 0 10.4 5.5"><path d="M.5 .5h9.4L5.2 5z" fill="#c7edcc" stroke="#6c7470" stroke-width=".9" stroke-linejoin="round"/></svg>
<svg class="ic" style="left:750px;top:85px;width:10.2px;height:3.8px;" viewBox="0 0 10.2 3.8"><rect x=".5" y=".5" width="9.2" height="2.8" fill="#c7edcc" stroke="#6c7470" stroke-width=".9"/></svg>
<svg class="ic" style="left:773px;top:85px;width:10.2px;height:9.4px;" viewBox="0 0 10.2 9.4"><rect x=".5" y=".5" width="9.2" height="8.4" fill="#c7edcc" stroke="#6c7470" stroke-width=".9"/><path d="M.5 2.6h9.2" stroke="#6c7470" stroke-width=".9"/></svg>
<svg class="ic" style="left:15.2px;top:112.2px;width:5.6px;height:5.6px;" viewBox="0 0 5.6 5.6"><path d="M5.6 0v5.6H0z" fill="#404040"/></svg>
<svg class="ic" style="left:34.2px;top:130.8px;width:5.6px;height:5.6px;" viewBox="0 0 5.6 5.6"><path d="M5.6 0v5.6H0z" fill="#404040"/></svg>
<svg class="ic" style="left:53.4px;top:148.8px;width:5.6px;height:5.6px;" viewBox="0 0 5.6 5.6"><path d="M5.6 0v5.6H0z" fill="#404040"/></svg>
<svg class="ic" style="left:28.8px;top:105.6px;width:16px;height:16px;" viewBox="0 0 16 16"><rect x=".5" y="1.5" width="14.2" height="13" fill="url(#gWin)" stroke="#b49a58"/>
<rect x="1" y="2" width="13.2" height="2.4" fill="url(#gBar)"/>
<text x="4.4" y="12.2" font-family="'Liberation Sans',sans-serif" font-weight="bold" font-size="9.5" fill="#2c5ca8">c</text></svg>
<svg class="ic" style="left:47.4px;top:123.8px;width:16px;height:16px;" viewBox="0 0 16 16"><g transform="translate(9.4 5.6)"><g fill="#f4c040" stroke="#c88c1c" stroke-width=".6"><circle cx="0" cy="0" r="3.6"/>
<path d="M-1-5h2v2h-2zM-1 3h2v2h-2zM-5-1h2v2h-2zM3-1h2v2h-2z"/><path d="M-1-5h2v2h-2zM-1 3h2v2h-2zM-5-1h2v2h-2zM3-1h2v2h-2z" transform="rotate(45)"/></g>
<circle cx="0" cy="0" r="3.3" fill="#f8d060"/><circle cx="0" cy="0" r="1.5" fill="#fff6d0" stroke="#d8a030" stroke-width=".5"/></g>
<rect x=".6" y="9" width="3.4" height="6.2" fill="url(#gYel)" stroke="#b08a20" stroke-width=".8"/>
<rect x="5" y="9" width="3.4" height="6.2" fill="url(#gYel)" stroke="#b08a20" stroke-width=".8"/>
<path d="M1.4 6.2Q2 2 6 1.6" fill="none" stroke="#2c5cb4" stroke-width="1.1"/><path d="M.2 4l1.2 3 2.2-2z" fill="#2c5cb4"/>
<path d="M14.6 10.4Q13.6 14.2 10 14.6" fill="none" stroke="#2c5cb4" stroke-width="1.1"/><path d="M15.8 12.4l-1.2-3-2.2 2z" fill="#2c5cb4"/></svg>
<svg class="ic" style="left:66px;top:142px;width:16px;height:16px;" viewBox="0 0 16 16"><g transform="translate(9.8 5.6)"><g fill="#f4c040" stroke="#c88c1c" stroke-width=".6"><circle cx="0" cy="0" r="3.6"/>
<path d="M-1-5h2v2h-2zM-1 3h2v2h-2zM-5-1h2v2h-2zM3-1h2v2h-2z"/><path d="M-1-5h2v2h-2zM-1 3h2v2h-2zM-5-1h2v2h-2zM3-1h2v2h-2z" transform="rotate(45)"/></g>
<circle cx="0" cy="0" r="3.3" fill="#f8d060"/><circle cx="0" cy="0" r="1.5" fill="#fff6d0" stroke="#d8a030" stroke-width=".5"/></g>
<rect x="1.2" y="8.4" width="3.4" height="6.2" fill="url(#gYel)" stroke="#b08a20" stroke-width=".8"/>
<rect x="5.6" y="8.4" width="3.4" height="6.2" fill="url(#gYel)" stroke="#b08a20" stroke-width=".8"/></svg>
<div style="left:83.5px;top:160px;width:182px;height:16.5px;box-sizing:border-box;background:#f0f0f0;border:1px solid #dadada;border-radius:3px"></div>
<svg class="ic" style="left:86px;top:160.2px;width:16px;height:16px;" viewBox="0 0 16 16"><rect x="1" y="2" width="12" height="2.4" fill="#2c5cb0"/><rect x="1" y="6" width="12" height="2.4" fill="#2c5cb0"/><rect x="1" y="10" width="12" height="2.4" fill="#2c5cb0"/>
<path d="M1 2.4h12M1 6.4h12M1 10.4h12" stroke="#6c9ce0" stroke-width=".8"/></svg>
<svg class="ic" style="left:47px;top:178px;width:16px;height:16px;" viewBox="0 0 16 16"><rect x="6.4" y=".8" width="7" height="13" rx=".8" fill="#dcdcdc" stroke="#8c8c8c" stroke-width=".9"/>
<path d="M7 5h5.8M7 9h5.8" stroke="#9c9c9c" stroke-width=".8"/>
<path d="M7.6 2v2.2l2.6-1.1z" fill="#2c9c3c"/>
<path d="M10.8 6.4h1.4M10.8 10.6h1.4" stroke="#6c6c6c" stroke-width=".9"/>
<path d="M1.2 8.4v7l6.2-3.5z" fill="#3cac4c" stroke="#2c8c3c" stroke-width=".6"/></svg>
<svg class="ic" style="left:47px;top:196px;width:16px;height:16px;" viewBox="0 0 16 16"><rect x="6.4" y=".8" width="7" height="13" rx=".8" fill="#dcdcdc" stroke="#8c8c8c" stroke-width=".9"/>
<path d="M7 5h5.8M7 9h5.8" stroke="#9c9c9c" stroke-width=".8"/>
<path d="M7.6 2v2.2l2.6-1.1z" fill="#2c9c3c"/>
<path d="M10.8 6.4h1.4M10.8 10.6h1.4" stroke="#6c6c6c" stroke-width=".9"/>
<path d="M1.2 8.4v7l6.2-3.5z" fill="#3cac4c" stroke="#2c8c3c" stroke-width=".6"/></svg>
<svg class="ic" style="left:47px;top:214px;width:16px;height:16px;" viewBox="0 0 16 16"><rect x="6.4" y=".8" width="7" height="13" rx=".8" fill="#dcdcdc" stroke="#8c8c8c" stroke-width=".9"/>
<path d="M7 5h5.8M7 9h5.8" stroke="#9c9c9c" stroke-width=".8"/>
<path d="M7.6 2v2.2l2.6-1.1z" fill="#2c9c3c"/>
<path d="M10.8 6.4h1.4M10.8 10.6h1.4" stroke="#6c6c6c" stroke-width=".9"/>
<path d="M1.2 8.4v7l6.2-3.5z" fill="#3cac4c" stroke="#2c8c3c" stroke-width=".6"/></svg>
<svg class="ic" style="left:882px;top:86.2px;width:10px;height:10px;" viewBox="0 0 10 10"><path d="M.5 2.2L2.2.5 5 3.3 7.8.5 9.5 2.2 6.7 5 9.5 7.8 7.8 9.5 5 6.7 2.2 9.5.5 7.8 3.3 5z" fill="#c9edd0" stroke="#5c665e" stroke-width="1" stroke-linejoin="round"/></svg>
<svg class="ic" style="left:904.6px;top:84.4px;width:16px;height:16px;" viewBox="0 0 16 16"><circle cx="4.2" cy="4.6" r="3.3" fill="#c4d8ec" stroke="#8caccc" stroke-width=".8"/>
<circle cx="10.4" cy="9.4" r="3.3" fill="#c4d8ec" stroke="#8caccc" stroke-width=".8"/></svg>
<svg class="ic" style="left:815px;top:157px;width:5px;height:8.8px;" viewBox="0 0 5 8.8"><path d="M.5 .5L4.500 4.400.5 8.300z" fill="none" stroke="#8c8c8c" stroke-width=".9" stroke-linejoin="round"/></svg>
<svg class="ic" style="left:828px;top:152.2px;width:16px;height:16px;" viewBox="0 0 16 16"><path d="M.8 14V5.400h3.600l1.200 1.400h6.600V14z" fill="#fdf2cc" stroke="#c08430" stroke-width=".9" stroke-linejoin="round"/>
<path d="M.8 14l3-5.400h11.600L12.400 14z" fill="url(#gFold)" stroke="#b87c2e" stroke-width=".9" stroke-linejoin="round"/>
<path d="M5.600 8.200Q5.400 1 10.600 1T15.400 8.200z" fill="url(#gDome)"/><path d="M5.600 8.300h9.800" stroke="#e4f0fc" stroke-width=".9"/></svg>
<svg class="ic" style="left:815px;top:175px;width:5px;height:8.8px;" viewBox="0 0 5 8.8"><path d="M.5 .5L4.500 4.400.5 8.300z" fill="none" stroke="#8c8c8c" stroke-width=".9" stroke-linejoin="round"/></svg>
<svg class="ic" style="left:828px;top:170.2px;width:16px;height:16px;" viewBox="0 0 16 16"><path d="M.8 14V5.400h3.600l1.200 1.400h6.600V14z" fill="#fdf2cc" stroke="#c08430" stroke-width=".9" stroke-linejoin="round"/>
<path d="M.8 14l3-5.400h11.600L12.400 14z" fill="url(#gFold)" stroke="#b87c2e" stroke-width=".9" stroke-linejoin="round"/>
<path d="M5.600 8.200Q5.400 1 10.600 1T15.400 8.200z" fill="url(#gDome)"/><path d="M5.600 8.300h9.800" stroke="#e4f0fc" stroke-width=".9"/></svg>
<svg class="ic" style="left:815px;top:193px;width:5px;height:8.8px;" viewBox="0 0 5 8.8"><path d="M.5 .5L4.500 4.400.5 8.300z" fill="none" stroke="#8c8c8c" stroke-width=".9" stroke-linejoin="round"/></svg>
<svg class="ic" style="left:828px;top:188.2px;width:16px;height:16px;" viewBox="0 0 16 16"><path d="M.8 14V5.400h3.600l1.200 1.400h6.600V14z" fill="#fdf2cc" stroke="#c08430" stroke-width=".9" stroke-linejoin="round"/>
<path d="M.8 14l3-5.400h11.600L12.400 14z" fill="url(#gFold)" stroke="#b87c2e" stroke-width=".9" stroke-linejoin="round"/>
<path d="M5.600 8.200Q5.400 1 10.600 1T15.400 8.200z" fill="url(#gDome)"/><path d="M5.600 8.300h9.800" stroke="#e4f0fc" stroke-width=".9"/></svg>
<svg class="ic" style="left:10.2px;top:339.4px;width:16px;height:16px;" viewBox="0 0 16 16"><path d="M1.5 1.2h7l3.6 3.6v9.6H1.5z" fill="#fdfdf8" stroke="#a88c50" stroke-width=".9" stroke-linejoin="round"/>
<path d="M8.5 1.2v3.6h3.6" fill="#f0e4b8" stroke="#a88c50" stroke-width=".7"/>
<text x="2" y="12.8" font-family="'Liberation Sans',sans-serif" font-weight="bold" font-size="9" fill="#3060a8" textLength="8.6" lengthAdjust="spacingAndGlyphs">.c</text></svg>
<svg class="ic" style="left:81px;top:342px;width:10px;height:10px;" viewBox="0 0 10 10"><path d="M.5 2.2L2.2.5 5 3.3 7.8.5 9.5 2.2 6.7 5 9.5 7.8 7.8 9.5 5 6.7 2.2 9.5.5 7.8 3.3 5z" fill="#c9edd0" stroke="#5c665e" stroke-width="1" stroke-linejoin="round"/></svg>
<svg class="ic" style="left:26px;top:409px;width:8.8px;height:8.8px;" viewBox="0 0 8.8 8.8"><circle cx="4.4" cy="4.4" r="4" fill="#f6f6fd" stroke="#b4b8cc" stroke-width=".8"/><path d="M2.2 4.4h4.4" stroke="#787c94" stroke-width="1"/></svg>
<svg class="ic" style="left:6px;top:437px;width:12px;height:14px;" viewBox="0 0 12 14"><path d="M-.4 3.4h2.6V1L8 6.3 2.2 11.8V9.4H-.4z" fill="#fff" opacity=".85"/><circle cx="8.5" cy="9.4" r="4.4" fill="#fff" opacity=".85"/>
<path d="M7.2 2.35h4.8M11.6 .2v4.5" stroke="#107830" stroke-width="1.1"/>
<path d="M.2 4.5h2.4V2.2L6.9 6.3 2.6 10.6V8.4H.2z" fill="#7cb0dc" stroke="#1c5c9c" stroke-width=".9" stroke-linejoin="round"/>
<circle cx="8.5" cy="9.4" r="3.3" fill="#78acd8" stroke="#1c4c84" stroke-width=".9"/><path d="M6.6 9.2h3.8" stroke="#a8d0ec" stroke-width="1"/>
<path d="M0 10.6l1.3 2.8 1.2-2.2" fill="none" stroke="#0c2c5c" stroke-width="1"/></svg>
<svg class="ic" style="left:10.2px;top:651.6px;width:13px;height:12.6px;" viewBox="0 0 13 12.6"><rect x=".9" y=".9" width="11.2" height="8.4" rx="1.2" fill="#fff" stroke="#3460b0" stroke-width="1.6"/>
<path d="M3.2 3.8h5.2M3.2 6h6.4" stroke="#3460b0" stroke-width="1.1"/>
<path d="M5.2 9.8h2.8v1.4h-2.8zM2.8 11.2h7.6v1.3H2.8z" fill="#2c54a0"/></svg>
<svg class="ic" style="left:79px;top:653px;width:10px;height:10px;" viewBox="0 0 10 10"><path d="M.5 2.2L2.2.5 5 3.3 7.8.5 9.5 2.2 6.7 5 9.5 7.8 7.8 9.5 5 6.7 2.2 9.5.5 7.8 3.3 5z" fill="#c9edd0" stroke="#5c665e" stroke-width="1" stroke-linejoin="round"/></svg>
<svg class="ic" style="left:100.8px;top:649.4px;width:16px;height:16px;opacity:0.5;" viewBox="0 0 16 16"><rect x="3.6" y="2.6" width="10.8" height="12" rx="1" fill="#e8d4a8" stroke="#c8a868" stroke-width=".8"/>
<rect x="6.6" y=".8" width="4.8" height="3" rx=".8" fill="#b4b4bc" stroke="#8c8c98" stroke-width=".6"/>
<rect x="5.2" y="4.6" width="7.6" height="8.6" fill="#fff"/>
<path d="M8 6.4h3.8M8 8.4h3.8M8 10.4h3.8" stroke="#8c98b0" stroke-width=".8"/>
<path d="M.8 8.8l2.6 3L7.6 6" fill="none" stroke="#2c6cd0" stroke-width="1.7"/></svg>
<svg class="ic" style="left:159.4px;top:650px;width:16px;height:16px;opacity:0.5;" viewBox="0 0 16 16"><path d="M1 1h12.4v8.6l-2 5H1z" fill="#fff" stroke="#8c8c98" stroke-width=".9"/>
<path d="M11 1v13.6" stroke="#b4b4c0" stroke-width=".8"/>
<circle cx="6" cy="4.4" r="2.5" fill="#e84848"/>
<path d="M6 8.6l3 4.8H3z" fill="#f4c038" stroke="#c89818" stroke-width=".5"/></svg>
<svg class="ic" style="left:240.6px;top:650.4px;width:16px;height:16px;opacity:0.5;" viewBox="0 0 16 16"><circle cx="7.6" cy="7.6" r="6.6" fill="#6c8cc0" stroke="#4c6ca4" stroke-width=".9"/><path d="M5.6 3.8v7.6L11.8 7.6z" fill="#fff"/></svg>
<svg class="ic" style="left:333.6px;top:650.4px;width:16px;height:16px;opacity:0.5;" viewBox="0 0 16 16"><path d="M2.4 3.2v10q0 1.6 3.6 1.6t3.6-1.6v-10z" fill="#88a4d8" stroke="#5c7cb8" stroke-width=".8"/>
<ellipse cx="6" cy="3.2" rx="3.6" ry="1.7" fill="#c8d8f4" stroke="#5c7cb8" stroke-width=".8"/>
<path d="M4 5.4v8" stroke="#d8e4f8" stroke-width="1.4"/></svg>
<span class="t" style="left:25.83px;top:4.84px;transform:scaleX(0.9707);">Debug</span>
<span class="t" style="left:65.45px;top:4.84px;">-</span>
<span class="t" style="left:72.28px;top:4.84px;transform:scaleX(1.0218);">bubble_frdmk22f/source/bubble.c</span>
<span class="t" style="left:257.00px;top:4.84px;">-</span>
<span class="t" style="left:263.93px;top:4.84px;transform:scaleX(0.9707);">Kinetis</span>
<span class="t" style="left:301.10px;top:4.84px;transform:scaleX(0.9978);">Design</span>
<span class="t" style="left:341.02px;top:4.84px;transform:scaleX(0.9621);">Studio</span>
<span class="t" style="left:378.90px;top:4.84px;">-</span>
<span class="t" style="left:386.45px;top:4.84px;transform:scaleX(0.9134);">C:\Freescale\SDK_2.1_FRDM-K22F</span>
<span class="t" style="left:6.41px;top:25.84px;transform:scaleX(0.9854);">File</span>
<span class="t" style="left:38.40px;top:25.84px;transform:scaleX(0.9978);">Edit</span>
<span class="t" style="left:72.82px;top:25.84px;transform:scaleX(0.9636);">Source</span>
<span class="t" style="left:122.42px;top:25.84px;transform:scaleX(0.9807);">Refactor</span>
<span class="t" style="left:180.79px;top:25.84px;transform:scaleX(1.0133);">Navigate</span>
<span class="t" style="left:241.83px;top:25.84px;transform:scaleX(0.9361);">Search</span>
<span class="t" style="left:290.81px;top:25.84px;transform:scaleX(0.9886);">Project</span>
<span class="t" style="left:341.83px;top:25.84px;transform:scaleX(0.9636);">Run</span>
<span class="t" style="left:376.46px;top:25.84px;transform:scaleX(0.9374);">Processor Expert</span>
<span class="t" style="left:476.49px;top:25.84px;transform:scaleX(1.0157);">µVision</span>
<span class="t" style="left:530.70px;top:25.84px;transform:scaleX(0.9973);">Window</span>
<span class="t" style="left:587.27px;top:25.84px;letter-spacing:0.257px;transform:scaleX(1.0300);">Help</span>
<span class="t" style="left:27.58px;top:84.84px;transform:scaleX(1.0182);">Debug</span>
<span class="t" style="left:49.30px;top:107.84px;">bubble_frdmk22f</span>
<span class="t" style="left:143.52px;top:107.84px;transform:scaleX(0.9503);">debug</span>
<span class="t" style="left:178.51px;top:107.84px;letter-spacing:0.096px;transform:scaleX(1.0300);">jlink</span>
<span class="t" style="left:204.59px;top:107.84px;transform:scaleX(0.8914);">[GDB</span>
<span class="t" style="left:234.28px;top:107.84px;letter-spacing:-0.700px;transform:scaleX(0.8383);">SEGGER</span>
<span class="t" style="left:277.40px;top:107.84px;transform:scaleX(0.9560);">J-Link</span>
<span class="t" style="left:312.09px;top:107.84px;transform:scaleX(1.0126);">Debugging]</span>
<span class="t" style="left:68.10px;top:125.84px;transform:scaleX(1.0022);">bubble_frdmk22f.elf</span>
<span class="t" style="left:87.52px;top:143.84px;transform:scaleX(0.9069);">Thread</span>
<span class="t" style="left:126.30px;top:143.84px;letter-spacing:-0.047px;transform:scaleX(0.8800);">#1</span>
<span class="t" style="left:142.13px;top:143.84px;transform:scaleX(0.9201);">57005</span>
<span class="t" style="left:176.75px;top:143.84px;transform:scaleX(0.9329);">(Suspended</span>
<span class="t" style="left:240.15px;top:143.84px;">:</span>
<span class="t" style="left:247.42px;top:143.84px;transform:scaleX(0.9788);">Breakpoint)</span>
<span class="t" style="left:105.68px;top:161.84px;letter-spacing:0.197px;transform:scaleX(1.0300);">main()</span>
<span class="t" style="left:144.53px;top:161.84px;transform:scaleX(0.9500);">at</span>
<span class="t" style="left:157.43px;top:161.84px;transform:scaleX(0.9563);">bubble.c:191</span>
<span class="t" style="left:226.74px;top:161.84px;transform:scaleX(0.8924);">0x23aa</span>
<span class="t" style="left:68.21px;top:179.84px;transform:scaleX(0.9028);">JLinkGDBServerCL</span>
<span class="t" style="left:68.28px;top:197.84px;letter-spacing:0.054px;transform:scaleX(1.0300);">arm-none-eabi-gdb</span>
<span class="t" style="left:68.30px;top:215.84px;transform:scaleX(0.9960);">Semihosting</span>
<span class="t" style="left:137.65px;top:215.84px;transform:scaleX(0.8908);">and</span>
<span class="t" style="left:159.05px;top:215.84px;transform:scaleX(0.9057);">SWV</span>
<span class="t" style="left:827.50px;top:84.84px;transform:scaleX(0.9521);">Variables</span>
<span class="t" style="left:806.20px;top:86.16px;font-size:9.5px;color:#3a4664;font-weight:bold;transform:scaleX(1.0115);">(x)=</span>
<span class="t" style="left:810.47px;top:132.84px;letter-spacing:0.079px;transform:scaleX(1.0300);">Name</span>
<span class="t" style="left:847.90px;top:153.84px;transform:scaleX(0.9922);">fxosHandle</span>
<span class="t" style="left:847.72px;top:171.84px;transform:scaleX(0.9330);">sensorData</span>
<span class="t" style="left:847.18px;top:189.84px;letter-spacing:0.011px;transform:scaleX(1.0300);">i2cConfig</span>
<span class="t" style="left:27.99px;top:340.24px;transform:scaleX(1.0120);">bubble.c</span>
<span class="t" style="left:28.01px;top:651.84px;transform:scaleX(0.9871);">Console</span>
<span class="t" style="left:121.82px;top:651.84px;color:#8c8c9a;transform:scaleX(0.9244);">Tasks</span>
<span class="t" style="left:179.61px;top:651.84px;color:#8c8c9a;transform:scaleX(0.9943);">Problems</span>
<span class="t" style="left:259.66px;top:651.84px;color:#8c8c9a;transform:scaleX(0.9364);">Executables</span>
<span class="t" style="left:350.89px;top:651.84px;color:#8c8c9a;transform:scaleX(1.0062);">Memory</span>
<span class="t" style="left:6.10px;top:673.84px;">bubble_frdmk22f</span>
<span class="t" style="left:100.32px;top:673.84px;transform:scaleX(0.9503);">debug</span>
<span class="t" style="left:135.31px;top:673.84px;letter-spacing:0.096px;transform:scaleX(1.0300);">jlink</span>
<span class="t" style="left:161.39px;top:673.84px;transform:scaleX(0.8914);">[GDB</span>
<span class="t" style="left:191.08px;top:673.84px;letter-spacing:-0.700px;transform:scaleX(0.8383);">SEGGER</span>
<span class="t" style="left:234.20px;top:673.84px;transform:scaleX(0.9560);">J-Link</span>
<span class="t" style="left:268.89px;top:673.84px;transform:scaleX(1.0126);">Debugging]</span>
<span class="t" style="left:334.51px;top:673.84px;transform:scaleX(0.9153);">JLinkGDBServerCL</span>
<span class="t" style="left:66.00px;top:363.04px;font-size:13px;font-family:'Liberation Mono', monospace;transform:scaleX(0.8973);">FTM_SetSoftwareTrigger(BOARD_TIMER_BASEADDR, true);</span>
<span class="t" style="left:38.00px;top:378.04px;font-size:13px;font-family:'Liberation Mono', monospace;transform:scaleX(0.8973);">}</span>
<span class="t" style="left:38.00px;top:408.04px;font-size:13px;font-family:'Liberation Mono', monospace;transform:scaleX(0.8973);"><b style="color:#7f0055">int</b> <b>main</b>(<b style="color:#7f0055">void</b>)</span>
<span class="t" style="left:38.00px;top:423.04px;font-size:13px;font-family:'Liberation Mono', monospace;transform:scaleX(0.8973);">{</span>
<span class="t" style="left:66.00px;top:438.04px;font-size:13px;font-family:'Liberation Mono', monospace;transform:scaleX(0.8973);"><span style="position:static;color:#005032">fxos_handle_t</span> fxosHandle = {0};</span>
<span class="t" style="left:66.00px;top:453.04px;font-size:13px;font-family:'Liberation Mono', monospace;transform:scaleX(0.8973);"><span style="position:static;color:#005032">fxos_data_t</span> sensorData = {0};</span>
<span class="t" style="left:66.00px;top:468.04px;font-size:13px;font-family:'Liberation Mono', monospace;transform:scaleX(0.8973);"><span style="position:static;color:#005032">i2c_master_config_t</span> i2cConfig = {0};</span>
<span class="t" style="left:66.00px;top:483.04px;font-size:13px;font-family:'Liberation Mono', monospace;transform:scaleX(0.8973);"><span style="position:static;color:#005032">uint8_t</span> sensorRange = 0;</span>
<span class="t" style="left:66.00px;top:498.04px;font-size:13px;font-family:'Liberation Mono', monospace;transform:scaleX(0.8973);"><span style="position:static;color:#005032">uint8_t</span> dataScale = 0;</span>
<span class="t" style="left:66.00px;top:513.04px;font-size:13px;font-family:'Liberation Mono', monospace;transform:scaleX(0.8973);"><span style="position:static;color:#005032">uint32_t</span> i2cSourceClock = 0;</span>
<span class="t" style="left:66.00px;top:528.04px;font-size:13px;font-family:'Liberation Mono', monospace;transform:scaleX(0.8973);"><span style="position:static;color:#005032">int16_t</span> xData = 0;</span>
<span class="t" style="left:66.00px;top:543.04px;font-size:13px;font-family:'Liberation Mono', monospace;transform:scaleX(0.8973);"><span style="position:static;color:#005032">int16_t</span> yData = 0;</span>
<span class="t" style="left:66.00px;top:558.04px;font-size:13px;font-family:'Liberation Mono', monospace;transform:scaleX(0.8973);"><span style="position:static;color:#005032">int16_t</span> xAngle = 0;</span>
<span class="t" style="left:66.00px;top:573.04px;font-size:13px;font-family:'Liberation Mono', monospace;transform:scaleX(0.8973);"><span style="position:static;color:#005032">int16_t</span> yAngle = 0;</span>
<span class="t" style="left:66.00px;top:588.04px;font-size:13px;font-family:'Liberation Mono', monospace;transform:scaleX(0.8973);"><span style="position:static;color:#005032">uint8_t</span> i = 0;</span>
<span class="t" style="left:66.00px;top:603.04px;font-size:13px;font-family:'Liberation Mono', monospace;transform:scaleX(0.8973);"><span style="position:static;color:#005032">uint8_t</span> regResult = 0;</span>
<span class="t" style="left:66.00px;top:618.04px;font-size:13px;font-family:'Liberation Mono', monospace;transform:scaleX(0.8973);clip-path:inset(0 0 11.5px 0);"><span style="position:static;color:#005032">uint8_t</span> array_addr_size = 0;</span>
<span class="t" style="left:8.00px;top:690.54px;font-size:13px;font-family:'Liberation Mono', monospace;transform:scaleX(0.8973);">Read 4 bytes @ address 0x000023AA (Data = 0x031CF107)</span>
<span class="t" style="left:8.00px;top:705.54px;font-size:13px;font-family:'Liberation Mono', monospace;transform:scaleX(0.8973);">Reading 64 bytes @ address 0x2000FFC0</span>
<span class="t" style="left:8.00px;top:720.54px;font-size:13px;font-family:'Liberation Mono', monospace;transform:scaleX(0.8973);">Reading 64 bytes @ address 0x2000FF80</span>
<span class="t" style="left:8.00px;top:735.54px;font-size:13px;font-family:'Liberation Mono', monospace;transform:scaleX(0.8973);">Reading 8 bytes @ address 0x7374616B</span>
<span class="t" style="left:8.00px;top:750.54px;font-size:13px;font-family:'Liberation Mono', monospace;transform:scaleX(0.8973);">WARNING: Failed to read memory @ address 0x7374616B</span>
<span class="t" style="left:8.00px;top:765.54px;font-size:13px;font-family:'Liberation Mono', monospace;transform:scaleX(0.8973);">WARNING: Failed to read memory @ address 0x7374616B</span>
<span class="t" style="left:8.00px;top:780.54px;font-size:13px;font-family:'Liberation Mono', monospace;transform:scaleX(0.8973);">WARNING: Failed to read memory @ address 0x7374616B</span>
</body></html>
